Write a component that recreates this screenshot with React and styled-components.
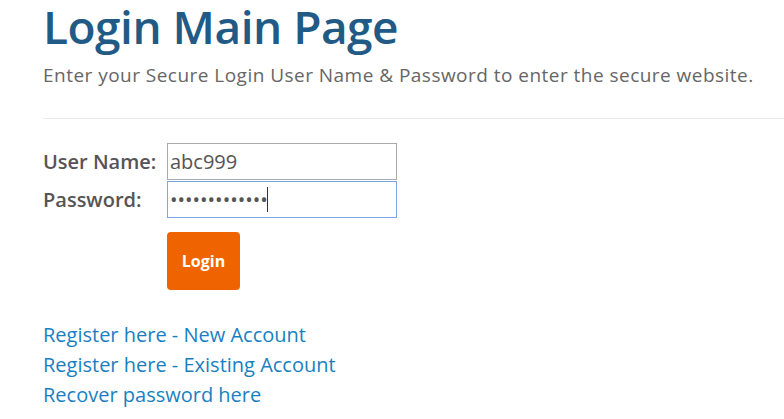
import { useState } from 'react';
import styled, { createGlobalStyle } from 'styled-components';

const GlobalStyle = createGlobalStyle`
  body {
    margin: 0;
    background: #fff;
    font-family: "Open Sans", "Noto Sans", sans-serif;
  }
`;

const Root = styled.div`
  padding: 2px 0 0 43px;
  width: 784px;
  box-sizing: border-box;
  overflow: hidden;
`;

const Title = styled.h1`
  margin: 0;
  font-size: 46px;
  line-height: 48px;
  font-weight: 600;
  letter-spacing: -0.5px;
  color: #215a85;
`;

const Subtitle = styled.p`
  margin: 12px 0 0;
  font-size: 19px;
  line-height: 27px;
  letter-spacing: 0.47px;
  color: #666;
`;

const Divider = styled.hr`
  margin: 29px 0 0;
  border: 0;
  border-top: 1px solid #eaeaea;
`;

const Form = styled.form`
  margin-top: 24px;
  display: grid;
  grid-template-columns: 124px 230px;
  row-gap: 1px;
  align-items: center;
`;

const Label = styled.label`
  font-size: 20px;
  font-weight: 600;
  color: #555;
`;

const Field = styled.div`
  position: relative;
`;

const Input = styled.input`
  box-sizing: border-box;
  width: 230px;
  height: 37px;
  padding: 0 2px;
  font-family: inherit;
  font-size: 20px;
  color: #555;
  border: 1px solid ${(p) => (p.$active ? '#7ba6e6' : '#aaa')};
  outline: none;
`;

const Caret = styled.span`
  position: absolute;
  left: 100px;
  top: 6px;
  width: 1px;
  height: 25px;
  background: #333;
`;

const SubmitButton = styled.button`
  grid-column: 2;
  justify-self: start;
  margin-top: 13px;
  width: 73px;
  height: 58px;
  border: 0;
  border-radius: 4px;
  background: #f06400;
  color: #fff;
  font-family: inherit;
  font-size: 16px;
  font-weight: 700;
  cursor: pointer;
`;

const Links = styled.div`
  margin-top: 30px;
  display: flex;
  flex-direction: column;
`;

const Link = styled.a`
  font-size: 20px;
  line-height: 30px;
  color: #1a7fc1;
  text-decoration: none;
`;

export default function App() {
  const [user, setUser] = useState('abc999');
  const [pass, setPass] = useState('abcdefghijklm');
  const controlInput = (setValue) => (e) => setValue(e.target.value);

  return (
    <Root>
      <GlobalStyle />
      <Title>Login Main Page</Title>
      <Subtitle>
        Enter your Secure Login User Name &amp; Password to enter the secure website.
      </Subtitle>
      <Divider />
      <Form onSubmit={(e) => e.preventDefault()}>
        <Label htmlFor="user">User Name:</Label>
        <Input id="user" value={user} onChange={controlInput(setUser)} />
        <Label htmlFor="pass">Password:</Label>
        <Field>
          <Input
            id="pass"
            type="password"
            $active
            value={pass}
            onChange={controlInput(setPass)}
          />
          <Caret />
        </Field>
        <SubmitButton>Login</SubmitButton>
      </Form>
      <Links>
        <Link href="#">Register here - New Account</Link>
        <Link href="#">Register here - Existing Account</Link>
        <Link href="#">Recover password here</Link>
      </Links>
    </Root>
  );
}
